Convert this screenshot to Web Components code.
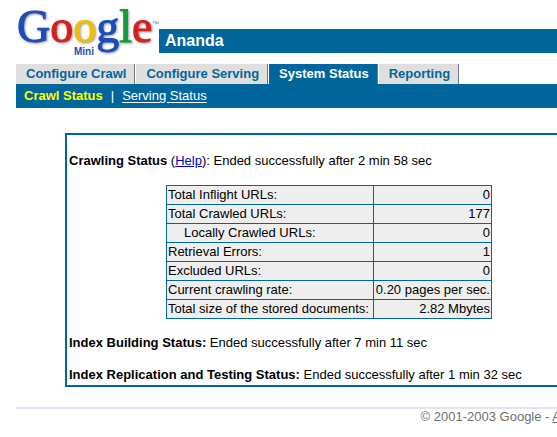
<!DOCTYPE html>
<html lang="en">
<head>
<meta charset="utf-8">
<title>Crawl Status</title>
<style>
  :root {
    --blue: #00669c;
  }
  body {
    margin: 0;
    background: #fff;
    color: #000;
    font: 13px/16px "Liberation Sans", Arial, sans-serif;
    overflow-x: hidden;
  }
</style>
</head>
<body>
<mini-admin></mini-admin>

<script>
class MiniLogo extends HTMLElement {
  constructor() {
    super();
    this.attachShadow({ mode: "open" });
    this.shadowRoot.innerHTML = `
      <style>
        :host { display: block; }
        svg { display: block; overflow: visible; }
        .word {
          font: 46px "Liberation Serif", serif;
          stroke-width: 1;
          filter: drop-shadow(1px 1px 1px #0006);
        }
        .blue { fill: #1c4cb8; stroke: #1c4cb8; }
        .red { fill: #d4201c; stroke: #d4201c; }
        .yellow { fill: #f0bc08; stroke: #f0bc08; }
        .green { fill: #149c38; stroke: #149c38; }
        .mini { font: bold 10px "Liberation Sans", sans-serif; fill: #2450b0; }
        .tm { font: 7px "Liberation Sans", sans-serif; fill: #777; }
      </style>
      <svg width="143" height="64" role="img" aria-label="Google Mini">
        <text class="word" x="1" y="42"><tspan class="blue">G</tspan><tspan class="red">o</tspan><tspan class="yellow">o</tspan><tspan class="blue">g</tspan><tspan class="green">l</tspan><tspan class="red">e</tspan></text>
        <text class="tm" x="136" y="26">™</text>
        <text class="mini" x="58" y="55">Mini</text>
      </svg>
    `;
  }
}
customElements.define("mini-logo", MiniLogo);

class PageHeader extends HTMLElement {
  constructor() {
    super();
    this.attachShadow({ mode: "open" });
    this.shadowRoot.innerHTML = `
      <style>
        :host { display: flex; align-items: flex-end; }
        h1 {
          flex: 1;
          margin: 0 0 11px;
          padding: 0 6px;
          background: var(--blue);
          color: #fff;
          font-size: 16px;
          line-height: 24px;
        }
      </style>
      <mini-logo></mini-logo>
      <h1><slot></slot></h1>
    `;
  }
}
customElements.define("page-header", PageHeader);

class MainTabs extends HTMLElement {
  connectedCallback() {
    const tabs = ["Configure Crawl", "Configure Serving", "System Status", "Reporting"];
    const active = this.getAttribute("active");
    this.attachShadow({ mode: "open" });
    this.shadowRoot.innerHTML = `
      <style>
        :host { display: block; }
        nav { display: flex; gap: 1px; }
        a {
          padding: 0 8px 0 10px;
          border-right: 1px solid #777;
          background: #dfdfdf;
          color: var(--blue);
          font-weight: bold;
          line-height: 20px;
          text-decoration: none;
          white-space: nowrap;
        }
        a.active { background: var(--blue); color: #fff; }
      </style>
      <nav aria-label="Main">
        ${tabs
          .map((tab) => `<a href="#" ${tab === active ? 'class="active" aria-current="page"' : ""}>${tab}</a>`)
          .join("")}
      </nav>
    `;
  }
}
customElements.define("main-tabs", MainTabs);

class SubNav extends HTMLElement {
  constructor() {
    super();
    this.attachShadow({ mode: "open" });
    this.shadowRoot.innerHTML = `
      <style>
        :host { display: block; background: var(--blue); color: #fff; }
        nav { display: flex; gap: 8px; padding: 0 8px; line-height: 24px; }
        a { color: #fff; text-underline-offset: 2px; }
        a.active { color: #ff0; font-weight: bold; text-decoration: none; }
      </style>
      <nav aria-label="System Status">
        <a href="#" class="active" aria-current="page">Crawl Status</a>
        <span>|</span>
        <a href="#">Serving Status</a>
      </nav>
    `;
  }
}
customElements.define("sub-nav", SubNav);

class StatusLine extends HTMLElement {
  constructor() {
    super();
    this.attachShadow({ mode: "open" });
    this.shadowRoot.innerHTML = `
      <style>
        :host { display: block; }
        p { margin: 16px 0; white-space: nowrap; }
        ::slotted(a) { color: #00c; }
      </style>
      <p><b><slot name="label"></slot></b><slot></slot></p>
    `;
  }
}
customElements.define("status-line", StatusLine);

class CrawlStats extends HTMLElement {
  connectedCallback() {
    const rows = [
      ["Total Inflight URLs:", "0"],
      ["Total Crawled URLs:", "177"],
      ["Locally Crawled URLs:", "0", "sub"],
      ["Retrieval Errors:", "1"],
      ["Excluded URLs:", "0"],
      ["Current crawling rate:", "0.20 pages per sec."],
      ["Total size of the stored documents:", "2.82 Mbytes"],
    ];
    this.attachShadow({ mode: "open" });
    this.shadowRoot.innerHTML = `
      <style>
        :host { display: block; margin-left: 97px; }
        table { border-collapse: collapse; background: #eee; }
        th, td {
          padding: 1px;
          border: 1px solid var(--blue);
          font-weight: normal;
          white-space: nowrap;
        }
        th { text-align: left; min-width: 204px; }
        td { text-align: right; min-width: 115px; }
        th.sub { padding-left: 17px; min-width: 0; }
      </style>
      <table>
        ${rows
          .map(([name, value, kind = ""]) => `<tr><th scope="row" class="${kind}">${name}</th><td>${value}</td></tr>`)
          .join("")}
      </table>
    `;
  }
}
customElements.define("crawl-stats", CrawlStats);

class StatusPanel extends HTMLElement {
  constructor() {
    super();
    this.attachShadow({ mode: "open" });
    this.shadowRoot.innerHTML = `
      <style>
        :host {
          display: flow-root;
          margin: 25px 0 20px 49px;
          border: 2px solid var(--blue);
          border-right: 0;
          padding: 2px;
        }
        /* the last line sits right on the frame */
        div { margin-bottom: -16px; display: flow-root; }
      </style>
      <div><slot></slot></div>
    `;
  }
}
customElements.define("status-panel", StatusPanel);

class PageFooter extends HTMLElement {
  constructor() {
    super();
    this.attachShadow({ mode: "open" });
    this.shadowRoot.innerHTML = `
      <style>
        :host {
          display: block;
          border-top: 2px solid #dce6f8;
          color: #6f6f6f;
          text-align: right;
        }
        p { margin: 0 -4px 0 0; white-space: nowrap; }
        a { color: inherit; }
      </style>
      <p>© 2001-2003 Google - <a href="#">A</a></p>
    `;
  }
}
customElements.define("page-footer", PageFooter);

class MiniAdmin extends HTMLElement {
  constructor() {
    super();
    this.attachShadow({ mode: "open" });
    this.shadowRoot.innerHTML = `
      <style>
        :host { display: block; padding-left: 16px; }
      </style>
      <page-header>Ananda</page-header>
      <main-tabs active="System Status"></main-tabs>
      <sub-nav></sub-nav>
      <status-panel>
        <status-line><span slot="label">Crawling Status</span> (<a href="#">Help</a>): Ended successfully after 2 min 58 sec</status-line>
        <crawl-stats></crawl-stats>
        <status-line><span slot="label">Index Building Status:</span> Ended successfully after 7 min 11 sec</status-line>
        <status-line><span slot="label">Index Replication and Testing Status:</span> Ended successfully after 1 min 32 sec</status-line>
      </status-panel>
      <page-footer></page-footer>
    `;
  }
}
customElements.define("mini-admin", MiniAdmin);
</script>
</body>
</html>
